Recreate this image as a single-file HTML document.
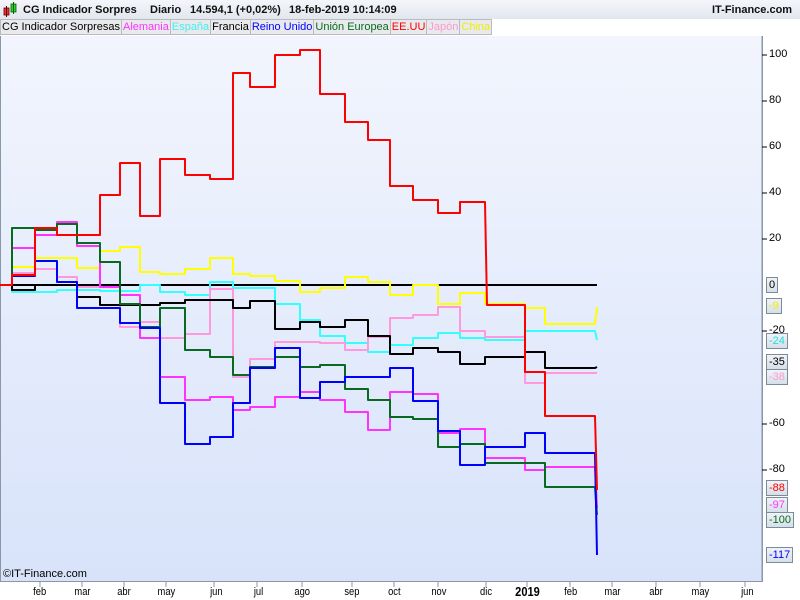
<!DOCTYPE html>
<html><head><meta charset="utf-8"><style>
*{margin:0;padding:0;box-sizing:border-box}
body{width:800px;height:600px;overflow:hidden;background:#fff;font-family:"Liberation Sans",sans-serif;position:relative}
#top{position:absolute;left:0;top:0;width:800px;height:19px;background:linear-gradient(#f4f6fa,#e2e6ee);font-size:11px;font-weight:bold;color:#111}
#top span{position:absolute;top:4px;white-space:nowrap}
#leg{position:absolute;left:0;top:19px;height:17px;font-size:11px;white-space:nowrap}
#leg span{display:inline-block;height:16px;line-height:15px;padding:0 1px;border:1px solid #bbb;background:#e8eaee;margin-right:-1px}
#plot{position:absolute;left:0;top:36px;width:763px;height:546px;background:linear-gradient(#f2f5fd,#d8e3fa);border-left:1px solid #8898a8;border-right:1px solid #8898a8;border-bottom:1px solid #8898a8}
.yl{position:absolute;left:769px;font-size:11px;color:#000}
.bx{position:absolute;left:766px;height:16px;font-size:11px;line-height:14px;padding:0 2px;border:1px solid #7a8c9c;background:linear-gradient(#f0f3f8,#d6dfea)}
.xl{position:absolute;top:586px;font-size:11px;color:#000;transform:scaleX(.85)}
</style></head><body>
<div id="top">
<svg style="position:absolute;left:3px;top:2px" width="14" height="16"><rect x="1" y="6" width="5" height="7" fill="#e33" stroke="#600" stroke-width=".8"/><line x1="3.5" y1="4" x2="3.5" y2="15" stroke="#600"/><rect x="8" y="2" width="5" height="8" fill="#3c3" stroke="#060" stroke-width=".8"/><line x1="10.5" y1="0" x2="10.5" y2="12" stroke="#060"/></svg>
<span style="left:23px">CG Indicador Sorpres</span>
<span style="left:150px">Diario</span>
<span style="left:190px">14.594,1 (+0,02%)</span>
<span style="left:289px">18-feb-2019 10:14:09</span>
<span style="left:712px">IT-Finance.com</span>
</div>
<div id="leg"><span style="color:#000">CG Indicador Sorpresas</span><span style="color:#f3f">Alemania</span><span style="color:#4ee">España</span><span>Francia</span><span style="color:#00f">Reino Unido</span><span style="color:#086a20">Unión Europea</span><span style="color:#f00">EE.UU</span><span style="color:#f9c">Japón</span><span style="color:#ee0">China</span></div>
<div id="plot"></div>
<svg style="position:absolute;left:0;top:0" width="800" height="600" fill="none" stroke-width="2" stroke-linejoin="round">
<line x1="0" y1="285" x2="597" y2="285" stroke="#000"/>
<path stroke="#ff0" d="M0 285H12V267H35V258H77V268H100V251H120V247H140V272H160V274H185V269H210V258H233V274H250V276H275V281H300V292H320V288H345V277H368V282H390V295H413V285H438V304H460V293H485V304H525V308H545V324H595L597 307"/>
<path stroke="#3ff" d="M0 285H12V292H57V290H100V291H140V285H160V292H185V295H210V282H233V288H275V304H300V320H320V336H345V343H368V352H390V345H413V338H438V333H460V338H485V340H525V331H595L597 340"/>
<path stroke="#f9d" d="M0 285H12V273H35V269H57V277H77V287H120V327H140V322H160V338H185V334H210V289H233V377H250V359H275V342H320V343H345V350H368V337H390V318H413V315H438V307H460V331H485V337H525V383H545V373H597"/>
<path stroke="#000" d="M0 285H12V290H35V285H77V297H100V305H160V303H185V300H233V308H250V301H275V329H300V322H320V327H345V320H368V336H390V354H413V348H438V352H460V364H485V357H525V352H545V368H595L597 367"/>
<path stroke="#f3f" d="M0 285H12V248H35V235H57V222H77V246H100V287H120V295H140V338H160V377H185V400H210V397H233V410H250V407H275V397H300V392H320V400H345V412H368V430H390V392H413V394H438V433H460V429H485V458H525V470H545V467H595L597 508"/>
<path stroke="#086a20" d="M0 285H12V228H35V230H57V224H77V243H100V262H120V304H140V327H160V308H185V350H210V357H233V375H250V367H275V357H300V367H320V365H345V389H368V400H390V417H413V419H438V447H460V444H485V463H545V487H595L597 515"/>
<path stroke="#00f" d="M0 285H12V276H35V261H57V282H77V308H120V323H140V328H160V403H185V444H210V437H233V403H250V368H275V348H300V398H320V382H345V377H368V377H390V368H413V401H438V431H460V465H485V447H525V433H545V453H595L597 555"/>
<path stroke="#f00" d="M0 285H12V275H35V228H57V235H100V195H120V163H140V216H160V159H185V175H210V179H233V73H250V87H275V55H300V50H320V94H345V122H368V140H390V186H413V200H438V213H460V202H485L487 305H525V372H545V416H595L597 490"/>
<g stroke-width="1">
<line x1="762" y1="36" x2="762" y2="582" stroke="#8898a8"/>
<g stroke="#000"><line x1="762" y1="55" x2="767" y2="55"/><line x1="762" y1="101" x2="767" y2="101"/><line x1="762" y1="147" x2="767" y2="147"/><line x1="762" y1="193" x2="767" y2="193"/><line x1="762" y1="239" x2="767" y2="239"/><line x1="762" y1="331" x2="767" y2="331"/><line x1="762" y1="424" x2="767" y2="424"/><line x1="762" y1="470" x2="767" y2="470"/></g>
<g stroke="#8898a8"><line x1="40" y1="582" x2="40" y2="587"/><line x1="82" y1="582" x2="82" y2="587"/><line x1="124" y1="582" x2="124" y2="587"/><line x1="166" y1="582" x2="166" y2="587"/><line x1="214" y1="582" x2="214" y2="587"/><line x1="257" y1="582" x2="257" y2="587"/><line x1="302" y1="582" x2="302" y2="587"/><line x1="352" y1="582" x2="352" y2="587"/><line x1="394" y1="582" x2="394" y2="587"/><line x1="438" y1="582" x2="438" y2="587"/><line x1="486" y1="582" x2="486" y2="587"/><line x1="527" y1="582" x2="527" y2="587"/><line x1="570" y1="582" x2="570" y2="587"/><line x1="612" y1="582" x2="612" y2="587"/><line x1="656" y1="582" x2="656" y2="587"/><line x1="700" y1="582" x2="700" y2="587"/><line x1="745" y1="582" x2="745" y2="587"/></g>
</g>
</svg>
<div class="yl" style="top:48px">100</div><div class="yl" style="top:94px">80</div><div class="yl" style="top:140px">60</div><div class="yl" style="top:186px">40</div><div class="yl" style="top:232px">20</div><div class="yl" style="top:324px">-20</div><div class="yl" style="top:417px">-60</div><div class="yl" style="top:463px">-80</div>
<div class="bx" style="top:277px">0</div>
<div class="bx" style="top:298px;color:#ee0">-9</div>
<div class="bx" style="top:333px;color:#2dd">-24</div>
<div class="bx" style="top:354px">-35</div>
<div class="bx" style="top:369px;color:#f9c">-38</div>
<div class="bx" style="top:480px;color:#f00">-88</div>
<div class="bx" style="top:497px;color:#f3f">-97</div>
<div class="bx" style="top:512px;color:#086a20">-100</div>
<div class="bx" style="top:547px;color:#00f">-117</div>
<div style="position:absolute;left:3px;top:568px;font-size:11px">©IT-Finance.com</div>
<div class="xl" style="left:32px">feb</div><div class="xl" style="left:73px">mar</div><div class="xl" style="left:116px">abr</div><div class="xl" style="left:156px">may</div><div class="xl" style="left:209px">jun</div><div class="xl" style="left:253px">jul</div><div class="xl" style="left:293px">ago</div><div class="xl" style="left:343px">sep</div><div class="xl" style="left:387px">oct</div><div class="xl" style="left:430px">nov</div><div class="xl" style="left:479px">dic</div><div class="xl" style="left:513px;font-weight:bold;font-size:13px;top:584px">2019</div><div class="xl" style="left:563px">feb</div><div class="xl" style="left:603px">mar</div><div class="xl" style="left:648px">abr</div><div class="xl" style="left:690px">may</div><div class="xl" style="left:740px">jun</div>
</body></html>
